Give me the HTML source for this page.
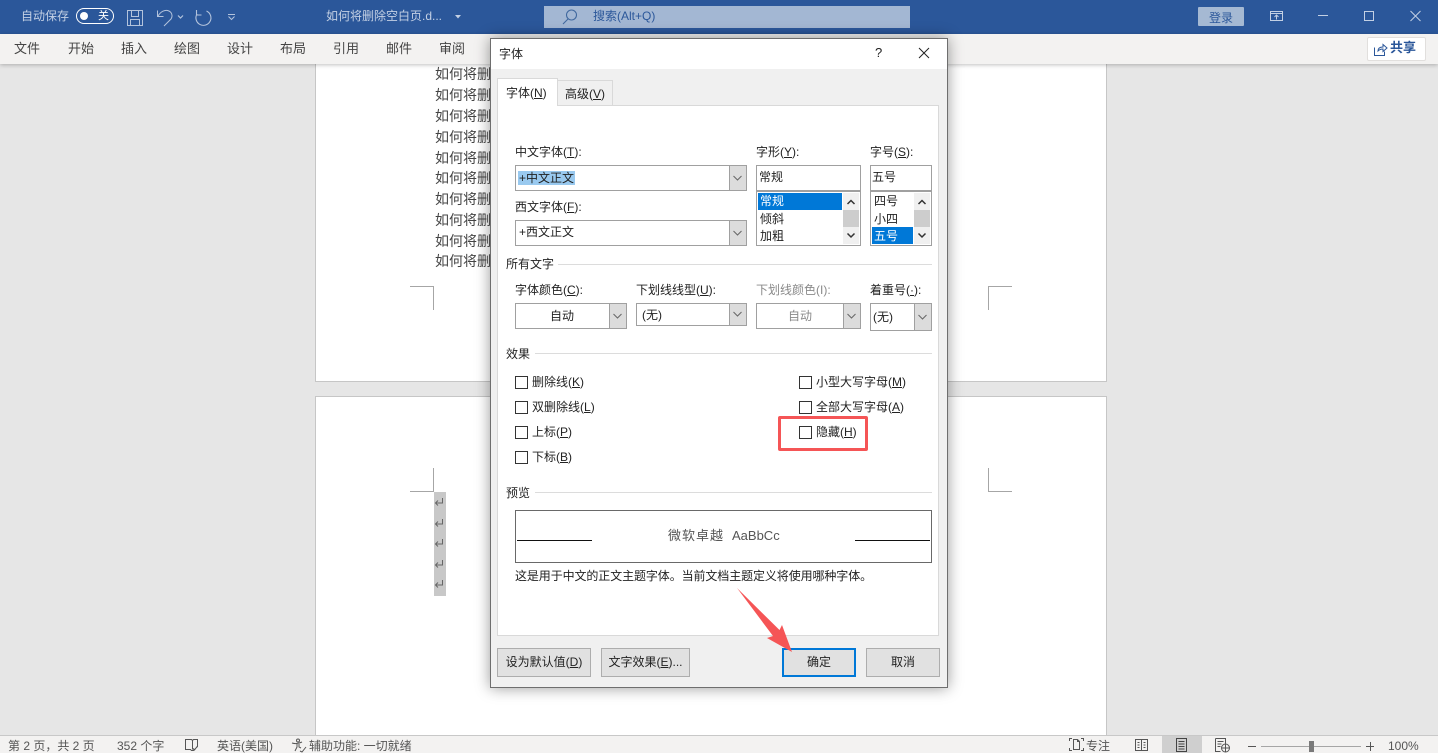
<!DOCTYPE html>
<html lang="zh-CN"><head><meta charset="utf-8"><title>字体</title>
<style>
html,body{margin:0;padding:0;width:1438px;height:753px;overflow:hidden;background:#e6e6e6}
body{position:relative;font-family:"Liberation Sans","Noto Sans CJK SC",sans-serif;font-size:12px;color:#222}
div,span.t,svg{position:absolute}
.t{position:absolute;white-space:nowrap;line-height:16px;height:16px}
u{text-decoration:underline;text-underline-offset:1px}
.rb{font-size:13px;color:#444;top:41px}
.dt{font-size:14px;color:#444;left:435px;line-height:20px;height:20px}
.st{font-size:12px;color:#555;top:738px}
.b{border:1px solid #a0a0a0;background:#fff;box-sizing:border-box}
.btn{background:#dcdcdc;border-left:1px solid #a0a0a0;border-right:1px solid #a0a0a0;border-bottom:1px solid #a0a0a0;box-sizing:border-box}
.sep{background:#dcdcdc;height:1px}
.cb{width:13px;height:13px;border:1px solid #333;background:#fff;box-sizing:border-box;left:515px}
.dbtn{background:#e1e1e1;border:1px solid #adadad;box-sizing:border-box;text-align:center;line-height:27px;top:648px;height:29px;font-size:12px;color:#222}
.mark{background:#a6a6a6}
</style></head><body>

<!-- document -->
<div style="left:315px;top:60px;width:792px;height:322px;background:#fff;border:1px solid #c6c6c6;box-sizing:border-box"></div>
<div style="left:315px;top:396px;width:792px;height:345px;background:#fff;border:1px solid #c6c6c6;box-sizing:border-box"></div>
<span class="t dt" style="top:64px">如何将删</span>
<span class="t dt" style="top:85px">如何将删</span>
<span class="t dt" style="top:106px">如何将删</span>
<span class="t dt" style="top:127px">如何将删</span>
<span class="t dt" style="top:148px">如何将删</span>
<span class="t dt" style="top:168px">如何将删</span>
<span class="t dt" style="top:189px">如何将删</span>
<span class="t dt" style="top:210px">如何将删</span>
<span class="t dt" style="top:231px">如何将删</span>
<span class="t dt" style="top:251px">如何将删</span>

<div class="mark" style="left:410px;top:286px;width:24px;height:1px"></div>
<div class="mark" style="left:433px;top:286px;width:1px;height:24px"></div>
<div class="mark" style="left:988px;top:286px;width:24px;height:1px"></div>
<div class="mark" style="left:988px;top:286px;width:1px;height:24px"></div>
<div class="mark" style="left:433px;top:468px;width:1px;height:24px"></div>
<div class="mark" style="left:410px;top:491px;width:24px;height:1px"></div>
<div class="mark" style="left:988px;top:468px;width:1px;height:24px"></div>
<div class="mark" style="left:988px;top:491px;width:24px;height:1px"></div>

<div style="left:434px;top:492px;width:12px;height:104px;background:#c8c8c8"></div>
<svg style="left:434px;top:492px" width="12" height="104" viewBox="0 0 12 104" fill="none" stroke="#666" stroke-width="1">
<path d="M8.500 6v5H1.500M4 8.500L1.500 11L4 13.500"/>
<path d="M8.500 27v5H1.500M4 29.500L1.500 32L4 34.500"/>
<path d="M8.500 47v5H1.500M4 49.500L1.500 52L4 54.500"/>
<path d="M8.500 68v5H1.500M4 70.500L1.500 73L4 75.500"/>
<path d="M8.500 88v5H1.500M4 90.500L1.500 93L4 95.500"/>
</svg>

<!-- title bar -->
<div style="left:0;top:0;width:1438px;height:34px;background:#2b579a"></div>
<span class="t" style="left:21px;top:8px;color:#c3d0e4">自动保存</span>
<div style="left:76px;top:8px;width:38px;height:16px;border:1px solid #fff;border-radius:8px;box-sizing:border-box"></div>
<div style="left:80px;top:12px;width:8px;height:8px;background:#fff;border-radius:50%"></div>
<span class="t" style="left:98px;top:8px;color:#fff;font-size:11px">关</span>
<svg style="left:120px;top:0" width="130" height="34" viewBox="0 0 130 34" fill="none" stroke="#b3c3dc" stroke-width="1">
<path d="M7.500 10.500h15v15h-15zM11.500 10.500v6h7v-6M10.500 25.500v-6h9v6"/>
<path d="M37.500 10.500v6h6M38 16C41 11 45 10 47.500 10.500C52 11.500 53 16 51 19L44 26"/>
<path d="M58 15.500l2.500 2.500l2.500-2.500" stroke-width="1.200"/>
<path d="M86.500 11a7.500 7.500 0 1 1-9.500 3M76.500 10v5h5" stroke-width="1.100"/>
<path d="M108 14.500h7M108.500 16.500l3 3l3-3"/>
</svg>
<span class="t" style="left:326px;top:8px;color:#c3d0e4;font-size:12px">如何将删除空白页.d...</span>
<svg style="left:455px;top:15px" width="6" height="4"><path d="M0 0h6L3 3.500z" fill="#c3d0e4"/></svg>
<div style="left:544px;top:6px;width:366px;height:22px;background:#a3b7d3"></div>
<svg style="left:560px;top:8px" width="20" height="18" fill="none" stroke="#41699f" stroke-width="1.100"><circle cx="11.500" cy="7" r="5"/><path d="M8 11L3 16"/></svg>
<span class="t" style="left:593px;top:8px;color:#2b579a">搜索(Alt+Q)</span>
<div style="left:1198px;top:7px;width:46px;height:19px;background:#a5b9d3;border-radius:1px"></div>
<span class="t" style="left:1209px;top:10px;color:#2b579a">登录</span>
<svg style="left:1268px;top:8px" width="160" height="18" fill="none" stroke="#c3d0e4" stroke-width="1">
<path d="M2.500 3.500h12v9h-12zM2.500 5.500h12M8.500 11.500v-4M6.500 9l2-2l2 2"/>
<path d="M50 7.500h10"/>
<rect x="96.500" y="3.500" width="9" height="9"/>
<path d="M142.500 3l10 10M152.500 3l-10 10"/>
</svg>

<!-- ribbon tabs -->
<div style="left:0;top:34px;width:1438px;height:30px;background:#f3f2f1;box-shadow:0 1px 4px rgba(0,0,0,.25)"></div>
<span class="t rb" style="left:14px">文件</span>
<span class="t rb" style="left:68px">开始</span>
<span class="t rb" style="left:121px">插入</span>
<span class="t rb" style="left:174px">绘图</span>
<span class="t rb" style="left:227px">设计</span>
<span class="t rb" style="left:280px">布局</span>
<span class="t rb" style="left:333px">引用</span>
<span class="t rb" style="left:386px">邮件</span>
<span class="t rb" style="left:439px">审阅</span>
<div style="left:1367px;top:37px;width:59px;height:24px;background:#fff;border:1px solid #e1dfdd;border-radius:2px;box-sizing:border-box"></div>
<svg style="left:1373px;top:42px" width="16" height="15" fill="none" stroke="#2b579a" stroke-width="1"><path d="M1.500 5.500v8h10v-4M5 9c0-3 2-4 5-4V2.500l4 3.500l-4 3.500V7C8 7 6 8 5 9z"/></svg>
<span class="t" style="left:1390px;top:40px;color:#2b579a;font-size:13px;font-weight:bold">共享</span>

<!-- status bar -->
<div style="left:0;top:735px;width:1438px;height:18px;background:#f3f2f1;border-top:1px solid #c8c8c8;box-sizing:border-box"></div>
<span class="t st" style="left:8px">第 2 页，共 2 页</span>
<span class="t st" style="left:117px">352 个字</span>
<svg style="left:184px;top:738px" width="16" height="15" fill="none" stroke="#555"><path d="M1.500 1.500h6l1 1l1-1h4v7l-4 4h-2l-1-1h-5zM8.500 2.500v9M8.500 10l2 2l3-4"/></svg>
<span class="t st" style="left:217px">英语(美国)</span>
<svg style="left:291px;top:738px" width="16" height="15" fill="none" stroke="#555"><circle cx="7" cy="2.500" r="1.500"/><path d="M1 5c3 1 6 1 10-1M6 6v3l-2 4M8 6v3l2 1M9 13l2 1l4-5"/></svg>
<span class="t st" style="left:309px">辅助功能: 一切就绪</span>
<svg style="left:1068px;top:737px" width="17" height="16" fill="none" stroke="#555"><path d="M1.500 4V1.500H4M13 1.500h2.500V4M1.500 11v2.500H4M13 13.500h2.500V11M5.500 12.500v-10h4l2 2v8zM9.500 2.500v2h2"/></svg>
<span class="t st" style="left:1086px">专注</span>
<svg style="left:1135px;top:738px" width="14" height="14" fill="none" stroke="#555"><path d="M.5 1.500h12v11H.5zM6.500 1.500v11M2.500 4.500h2M2.500 7h2M2.500 9.500h2M8.500 4.500h2M8.500 7h2M8.500 9.500h2"/></svg>
<div style="left:1162px;top:736px;width:40px;height:17px;background:#cfcfcf"></div>
<svg style="left:1175px;top:738px" width="14" height="14" fill="none" stroke="#444"><path d="M1.500.5h10v13h-10zM3.500 3.500h6M3.500 6h6M3.500 8.500h6M3.500 11h6"/></svg>
<svg style="left:1215px;top:738px" width="16" height="15" fill="none" stroke="#555"><path d="M.5.500h10v5M.5.500v13h5M2.500 3.500h6M2.500 6h4M2.500 8.500h3"/><circle cx="10.500" cy="10" r="4"/><path d="M6.500 10h8M10.500 6v8"/></svg>
<div style="left:1248px;top:746px;width:8px;height:1px;background:#555"></div>
<div style="left:1261px;top:746px;width:100px;height:1px;background:#a6a6a6"></div>
<div style="left:1309px;top:741px;width:5px;height:11px;background:#7a7a7a"></div>
<div style="left:1366px;top:746px;width:8px;height:1px;background:#555"></div>
<div style="left:1370px;top:742px;width:1px;height:9px;background:#555"></div>
<span class="t st" style="left:1388px">100%</span>

<!-- dialog -->
<div style="left:490px;top:38px;width:458px;height:650px;background:#f0f0f0;border:1px solid #6e6e6e;box-sizing:border-box;box-shadow:0 0 14px rgba(0,0,0,.4)"></div>
<div style="left:491px;top:39px;width:456px;height:30px;background:#fff"></div>
<span class="t" style="left:499px;top:46px">字体</span>
<span class="t" style="left:875px;top:45px;font-size:13px">?</span>
<svg style="left:918px;top:47px" width="13" height="13" fill="none" stroke="#222" stroke-width="1"><path d="M1 1l10 10M11 1L1 11"/></svg>

<!-- tabs and panel -->
<div style="left:497px;top:105px;width:442px;height:531px;background:#fff;border:1px solid #d9d9d9;box-sizing:border-box"></div>
<div style="left:558px;top:80px;width:55px;height:26px;background:#f0f0f0;border:1px solid #d9d9d9;border-left:0;box-sizing:border-box"></div>
<div style="left:497px;top:78px;width:61px;height:28px;background:#fff;border:1px solid #d9d9d9;border-bottom:0;box-sizing:border-box"></div>
<span class="t" style="left:506px;top:85px">字体(<u>N</u>)</span>
<span class="t" style="left:565px;top:86px">高级(<u>V</u>)</span>

<!-- font labels -->
<span class="t" style="left:515px;top:144px">中文字体(<u>T</u>):</span>
<span class="t" style="left:756px;top:144px">字形(<u>Y</u>):</span>
<span class="t" style="left:870px;top:144px">字号(<u>S</u>):</span>
<span class="t" style="left:515px;top:199px">西文字体(<u>F</u>):</span>

<div class="b" style="left:515px;top:165px;width:232px;height:26px"></div>
<div class="btn" style="left:729px;top:166px;width:18px;height:25px"></div>
<div style="left:518px;top:171px;width:57px;height:14px;background:#99c9ef"></div>
<span class="t" style="left:519px;top:170px">+中文正文</span>

<div class="b" style="left:515px;top:220px;width:232px;height:26px"></div>
<div class="btn" style="left:729px;top:221px;width:18px;height:25px"></div>
<span class="t" style="left:519px;top:224px">+西文正文</span>

<div class="b" style="left:756px;top:165px;width:105px;height:26px"></div>
<span class="t" style="left:759px;top:169px">常规</span>
<div class="b" style="left:756px;top:191px;width:105px;height:55px"></div>
<div style="left:758px;top:193px;width:84px;height:17px;background:#0078d7"></div>
<span class="t" style="left:760px;top:193px;color:#fff">常规</span>
<span class="t" style="left:760px;top:211px">倾斜</span>
<span class="t" style="left:760px;top:228px">加粗</span>
<div style="left:843px;top:193px;width:16px;height:51px;background:#f0f0f0"></div>
<div style="left:843px;top:210px;width:16px;height:17px;background:#cdcdcd"></div>

<div class="b" style="left:870px;top:165px;width:62px;height:26px"></div>
<span class="t" style="left:872px;top:169px">五号</span>
<div class="b" style="left:870px;top:191px;width:62px;height:55px"></div>
<div style="left:872px;top:227px;width:41px;height:17px;background:#0078d7"></div>
<span class="t" style="left:874px;top:193px">四号</span>
<span class="t" style="left:874px;top:211px">小四</span>
<span class="t" style="left:874px;top:228px;color:#fff">五号</span>
<div style="left:914px;top:193px;width:16px;height:51px;background:#f0f0f0"></div>
<div style="left:914px;top:210px;width:16px;height:17px;background:#cdcdcd"></div>
<svg style="left:0;top:0;width:1438px;height:753px" viewBox="0 0 1438 753" fill="none" stroke="#333" stroke-width="1.500">
<path d="M847.500 204l3.500-3.500l3.500 3.500M847.500 233.500l3.500 3.500l3.500-3.500M918.500 204l3.500-3.500l3.500 3.500M918.500 233.500l3.500 3.500l3.500-3.500"/>
</svg>

<!-- all text -->
<span class="t" style="left:506px;top:256px">所有文字</span>
<div class="sep" style="left:558px;top:264px;width:374px"></div>
<span class="t" style="left:515px;top:282px">字体颜色(<u>C</u>):</span>
<span class="t" style="left:636px;top:282px">下划线线型(<u>U</u>):</span>
<span class="t" style="left:756px;top:282px;color:#8a8a8a">下划线颜色(I):</span>
<span class="t" style="left:870px;top:282px">着重号(<u>·</u>):</span>

<div class="b" style="left:515px;top:303px;width:112px;height:26px"></div>
<div class="btn" style="left:609px;top:304px;width:18px;height:25px"></div>
<span class="t" style="left:550px;top:308px">自动</span>
<div class="b" style="left:636px;top:303px;width:111px;height:23px"></div>
<div class="btn" style="left:729px;top:304px;width:18px;height:22px"></div>
<span class="t" style="left:642px;top:307px">(无)</span>
<div class="b" style="left:756px;top:303px;width:105px;height:26px"></div>
<div class="btn" style="left:843px;top:304px;width:18px;height:25px"></div>
<span class="t" style="left:788px;top:308px;color:#8a8a8a">自动</span>
<div class="b" style="left:870px;top:303px;width:62px;height:28px"></div>
<div class="btn" style="left:914px;top:304px;width:18px;height:27px"></div>
<span class="t" style="left:873px;top:309px">(无)</span>
<svg style="left:0;top:0;width:1438px;height:753px" viewBox="0 0 1438 753" fill="none" stroke="#666" stroke-width="1">
<path d="M733.500 176l4 4l4-4M733.500 231l4 4l4-4M613.500 314l4 4l4-4M733.500 312l4 4l4-4M847.500 314l4 4l4-4M918.500 315l4 4l4-4"/>
</svg>

<!-- effects -->
<span class="t" style="left:506px;top:346px">效果</span>
<div class="sep" style="left:535px;top:353px;width:397px"></div>
<div class="cb" style="top:376px"></div><span class="t" style="left:532px;top:374px">删除线(<u>K</u>)</span>
<div class="cb" style="top:401px"></div><span class="t" style="left:532px;top:399px">双删除线(<u>L</u>)</span>
<div class="cb" style="top:426px"></div><span class="t" style="left:532px;top:424px">上标(<u>P</u>)</span>
<div class="cb" style="top:451px"></div><span class="t" style="left:532px;top:449px">下标(<u>B</u>)</span>
<div class="cb" style="top:376px;left:799px"></div><span class="t" style="left:816px;top:374px">小型大写字母(<u>M</u>)</span>
<div class="cb" style="top:401px;left:799px"></div><span class="t" style="left:816px;top:399px">全部大写字母(<u>A</u>)</span>
<div class="cb" style="top:426px;left:799px"></div><span class="t" style="left:816px;top:424px">隐藏(<u>H</u>)</span>
<div style="left:778px;top:416px;width:90px;height:35px;border:3px solid #f55556;border-radius:2px;box-sizing:border-box"></div>

<!-- preview -->
<span class="t" style="left:506px;top:485px">预览</span>
<div class="sep" style="left:535px;top:492px;width:397px"></div>
<div style="left:515px;top:510px;width:417px;height:53px;background:#fff;border:1px solid #696969;box-sizing:border-box"></div>
<div style="left:517px;top:540px;width:75px;height:1px;background:#111"></div>
<div style="left:855px;top:540px;width:75px;height:1px;background:#111"></div>
<span class="t" style="left:668px;top:528px;color:#555;font-size:13px;letter-spacing:1px">微软卓越</span>
<span class="t" style="left:732px;top:528px;color:#555;font-size:13px">AaBbCc</span>
<span class="t" style="left:515px;top:568px;font-size:12px;letter-spacing:-.1px">这是用于中文的正文主题字体。当前文档主题定义将使用哪种字体。</span>

<!-- buttons -->
<div class="dbtn" style="left:497px;width:94px">设为默认值(<u>D</u>)</div>
<div class="dbtn" style="left:601px;width:89px">文字效果(<u>E</u>)...</div>
<div class="dbtn" style="left:782px;width:74px;border:2px solid #0078d7;line-height:25px">确定</div>
<div class="dbtn" style="left:866px;width:74px">取消</div>

<svg style="left:0;top:0;width:1438px;height:753px" viewBox="0 0 1438 753">
<path d="M737 588L779.500 630L782 625L792 652L767 638L773 636Z" fill="#f55556"/>
</svg>
</body></html>
